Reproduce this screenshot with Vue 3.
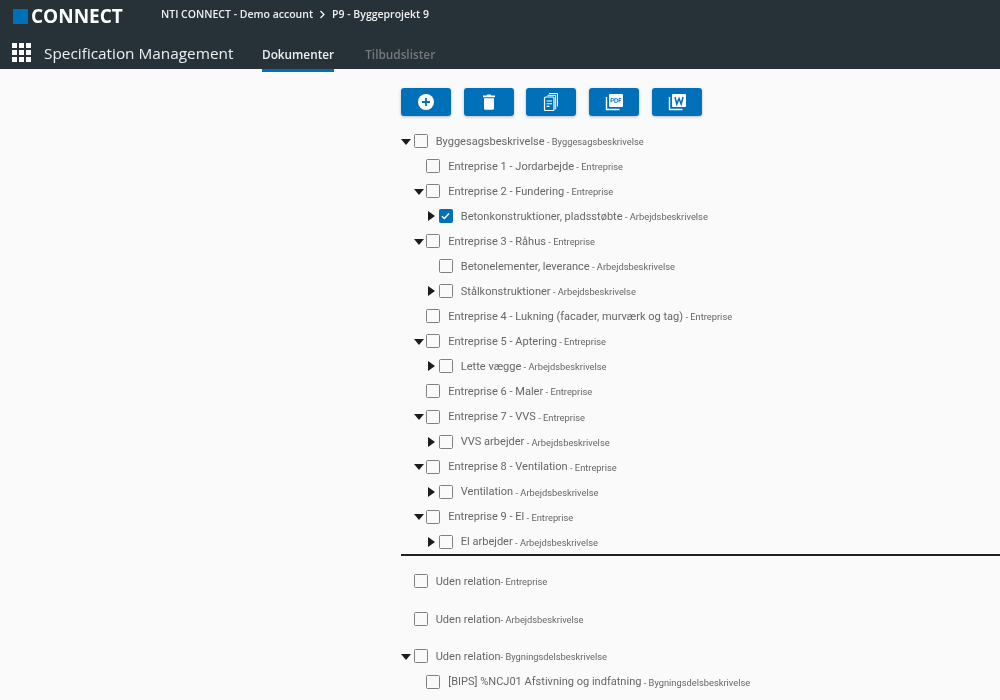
<script setup>
const buttons = ['add', 'trash', 'copy', 'pdf', 'word']
const tree = [
  { level: 0, arrow: 'down', label: 'Byggesagsbeskrivelse', type: 'Byggesagsbeskrivelse' },
  { level: 1, label: 'Entreprise 1 - Jordarbejde', type: 'Entreprise' },
  { level: 1, arrow: 'down', label: 'Entreprise 2 - Fundering', type: 'Entreprise' },
  { level: 2, arrow: 'right', checked: true, label: 'Betonkonstruktioner, pladsstøbte', type: 'Arbejdsbeskrivelse' },
  { level: 1, arrow: 'down', label: 'Entreprise 3 - Råhus', type: 'Entreprise' },
  { level: 2, label: 'Betonelementer, leverance', type: 'Arbejdsbeskrivelse' },
  { level: 2, arrow: 'right', label: 'Stålkonstruktioner', type: 'Arbejdsbeskrivelse' },
  { level: 1, label: 'Entreprise 4 - Lukning (facader, murværk og tag)', type: 'Entreprise' },
  { level: 1, arrow: 'down', label: 'Entreprise 5 - Aptering', type: 'Entreprise' },
  { level: 2, arrow: 'right', label: 'Lette vægge', type: 'Arbejdsbeskrivelse' },
  { level: 1, label: 'Entreprise 6 - Maler', type: 'Entreprise' },
  { level: 1, arrow: 'down', label: 'Entreprise 7 - VVS', type: 'Entreprise' },
  { level: 2, arrow: 'right', label: 'VVS arbejder', type: 'Arbejdsbeskrivelse' },
  { level: 1, arrow: 'down', label: 'Entreprise 8 - Ventilation', type: 'Entreprise' },
  { level: 2, arrow: 'right', label: 'Ventilation', type: 'Arbejdsbeskrivelse' },
  { level: 1, arrow: 'down', label: 'Entreprise 9 - El', type: 'Entreprise' },
  { level: 2, arrow: 'right', label: 'El arbejder', type: 'Arbejdsbeskrivelse' },
]
const indent = (level) => ({ paddingLeft: `${level * 12.55}px` })
</script>

<template>
  <div class="page">
    <header class="header">
      <div class="top">
        <div class="brand"><span class="logo-box"></span><span class="logo-text">CONNECT</span></div>
        <div class="crumbs">
          <span>NTI CONNECT - Demo account</span>
          <svg class="chev" width="7" height="9" viewBox="0 0 7 9"><path d="M1.500 1 L5 4.500 L1.500 8" fill="none" stroke="#fff" stroke-width="1.200"/></svg>
          <span>P9 - Byggeprojekt 9</span>
        </div>
      </div>
      <div class="bottom">
        <div class="grid-icon"><i v-for="n in 9" :key="n"></i></div>
        <div class="app-title">Specification Management</div>
        <nav class="tabs">
          <span class="tab active">Dokumenter</span>
          <span class="tab">Tilbudslister</span>
        </nav>
      </div>
    </header>

    <main class="main">
      <div class="toolbar">
        <button v-for="b in buttons" :key="b" class="btn" type="button">
          <svg v-if="b === 'add'" width="18" height="18" viewBox="0 0 18 18">
            <circle cx="9" cy="9" r="8" fill="#fff"/>
            <path d="M9 5v8M5 9h8" stroke="#0070b8" stroke-width="1.800"/>
          </svg>
          <svg v-else-if="b === 'trash'" width="18" height="18" viewBox="0 0 18 18">
            <path d="M3 2.500h3.500l.8-1h3.400l.8 1H15v1.700H3z" fill="#fff"/>
            <path d="M4 5.300h10v10a1.500 1.500 0 0 1-1.500 1.500h-7A1.500 1.500 0 0 1 4 15.300z" fill="#fff"/>
          </svg>
          <svg v-else-if="b === 'copy'" width="18" height="20" viewBox="0 0 18 20" fill="none" stroke="#fff">
            <path d="M7 1.500h8.500v13" stroke-width="1"/>
            <path d="M5.500 3.300h8.200v14" stroke-width="1"/>
            <rect x="2.500" y="5" width="9.500" height="13.500" rx="1" stroke-width="1.200"/>
            <path d="M4.500 9h5.500M4.500 11.700h5.500M4.500 14.400h3" stroke-width="1.100"/>
          </svg>
          <svg v-else-if="b === 'pdf'" width="20" height="18" viewBox="0 0 20 18">
            <rect x="5" y="1" width="14" height="13" rx="1" fill="#fff"/>
            <path d="M2.500 4v12.500h13" fill="none" stroke="#fff" stroke-width="1.400"/>
            <path d="M7 9.500V5.500h1.600a1.100 1.100 0 0 1 0 2.400H7M10.800 5.500v4h1a2 2 0 0 0 0-4zM15 9.500v-4h2.200M15 7.500h1.800" fill="none" stroke="#0070b8" stroke-width="0.900"/>
          </svg>
          <svg v-else width="20" height="18" viewBox="0 0 20 18">
            <rect x="5" y="1" width="14" height="13" rx="1" fill="#fff"/>
            <path d="M2.500 4v12.500h13" fill="none" stroke="#fff" stroke-width="1.400"/>
            <path d="M8 4l1.800 7 2.200-5.500 2.200 5.500 1.800-7" fill="none" stroke="#0070b8" stroke-width="1.500"/>
          </svg>
        </button>
      </div>

      <div class="tree">
        <div v-for="(n, i) in tree" :key="i" class="row" :style="indent(n.level)">
          <span class="toggler">
            <span v-if="n.arrow" :class="['arrow', n.arrow]"></span>
          </span>
          <span :class="['check', { on: n.checked }]">
            <svg v-if="n.checked" width="9" height="8" viewBox="0 0 9 8"><path d="M1 4.200 L3.400 6.400 L8 1.500" fill="none" stroke="#fff" stroke-width="1.400"/></svg>
          </span>
          <span class="label">{{ n.label }}</span>
          <span class="type">&nbsp;- {{ n.type }}</span>
        </div>
      </div>

      <div class="divider"></div>

      <div class="loose">
        <div class="row first">
          <span class="toggler"></span><span class="check"></span>
          <span class="label">Uden relation</span><span class="type">- Entreprise</span>
        </div>
        <div class="row second">
          <span class="toggler"></span><span class="check"></span>
          <span class="label">Uden relation</span><span class="type">- Arbejdsbeskrivelse</span>
        </div>
        <div class="row third">
          <span class="toggler"><span class="arrow down"></span></span><span class="check"></span>
          <span class="label">Uden relation</span><span class="type">- Bygningsdelsbeskrivelse</span>
        </div>
        <div class="row" :style="indent(1)">
          <span class="toggler"></span><span class="check"></span>
          <span class="label">[BIPS] %NCJ01 Afstivning og indfatning</span>
          <span class="type">&nbsp;- Bygningsdelsbeskrivelse</span>
        </div>
      </div>
    </main>
  </div>
</template>

<style>
html, body { margin: 0; background: #fafafa; overflow: hidden; }
</style>

<style scoped>
.page {
  width: 1000px;
  height: 700px;
  overflow: hidden;
  background: #fafafa;
  font-family: Roboto, "Liberation Sans", sans-serif;
  filter: blur(0.3px);
}
.header {
  height: 69px;
  background: #263238;
  color: #fff;
  display: flex;
  flex-direction: column;
}
.top {
  height: 32px;
  display: flex;
  align-items: center;
}
.brand {
  display: flex;
  align-items: center;
  padding-left: 13px;
  width: 161px;
  box-sizing: border-box;
}
.logo-box {
  width: 15px;
  height: 15px;
  background: #0070b8;
  margin-right: 3px;
}
.logo-text {
  font-family: "Open Sans", sans-serif;
  font-weight: 700;
  font-size: 19px;
  line-height: 20px;
}
.crumbs {
  display: flex;
  align-items: center;
  gap: 6px;
  font-family: "Open Sans", sans-serif;
  font-size: 10.500px;
  font-weight: 600;
  color: #f0f0f0;
  margin-top: -4px;
}
.bottom {
  height: 37px;
  display: flex;
  align-items: flex-start;
  position: relative;
}
.grid-icon {
  display: grid;
  grid-template-columns: repeat(3, 5px);
  grid-auto-rows: 5px;
  gap: 2px;
  margin: 11px 0 0 12px;
}
.grid-icon i { background: #fff; display: block; }
.app-title {
  font-family: "Open Sans", sans-serif;
  font-size: 15.350px;
  color: #eceff1;
  line-height: 20px;
  margin: 11px 0 0 13px;
  width: 218px;
  white-space: nowrap;
}
.tabs {
  display: flex;
  gap: 31px;
  margin-top: 13px;
}
.tab {
  font-family: "Open Sans", sans-serif;
  font-size: 11.800px;
  font-weight: 600;
  color: #75797c;
  line-height: 18px;
  position: relative;
  height: 24px;
}
.tab.active { color: #eceff1; }
.tab.active::after {
  content: "";
  position: absolute;
  left: 0;
  right: 0;
  bottom: -3px;
  height: 3px;
  background: #0070b8;
}
.main { padding: 19px 0 0 401px; }
.toolbar { display: flex; gap: 12.670px; }
.btn {
  width: 50px;
  height: 28px;
  padding: 0;
  border: 0;
  border-radius: 3px;
  background: #0070b8;
  box-shadow: 0 1px 3px rgba(0, 0, 0, .25);
  display: flex;
  align-items: center;
  justify-content: center;
}
.tree { margin-top: 12.500px; }
.row {
  height: 25.050px;
  display: flex;
  align-items: center;
  white-space: nowrap;
  color: #666;
}
.toggler {
  width: 12.500px;
  flex: none;
  display: flex;
  align-items: center;
}
.arrow { display: block; width: 0; height: 0; }
.arrow.down {
  border-left: 5px solid transparent;
  border-right: 5px solid transparent;
  border-top: 6px solid #1c1c1c;
  margin-top: 1px;
}
.arrow.right {
  border-top: 5px solid transparent;
  border-bottom: 5px solid transparent;
  border-left: 7px solid #1c1c1c;
  margin-left: 1.500px;
}
.check {
  width: 12px;
  height: 12px;
  flex: none;
  border: 1.300px solid #808080;
  border-radius: 1.500px;
  margin-right: 8.200px;
  display: flex;
  align-items: center;
  justify-content: center;
}
.check.on { background: #0070b8; border-color: #0070b8; }
.label { font-size: 11.040px; }
.type { font-size: 9.300px; margin-top: 1px; }
.divider {
  height: 2px;
  background: #212121;
}
.loose { padding-top: 12.500px; }
.loose .second { margin-top: 12.700px; }
.loose .third { margin-top: 12.400px; }
</style>
